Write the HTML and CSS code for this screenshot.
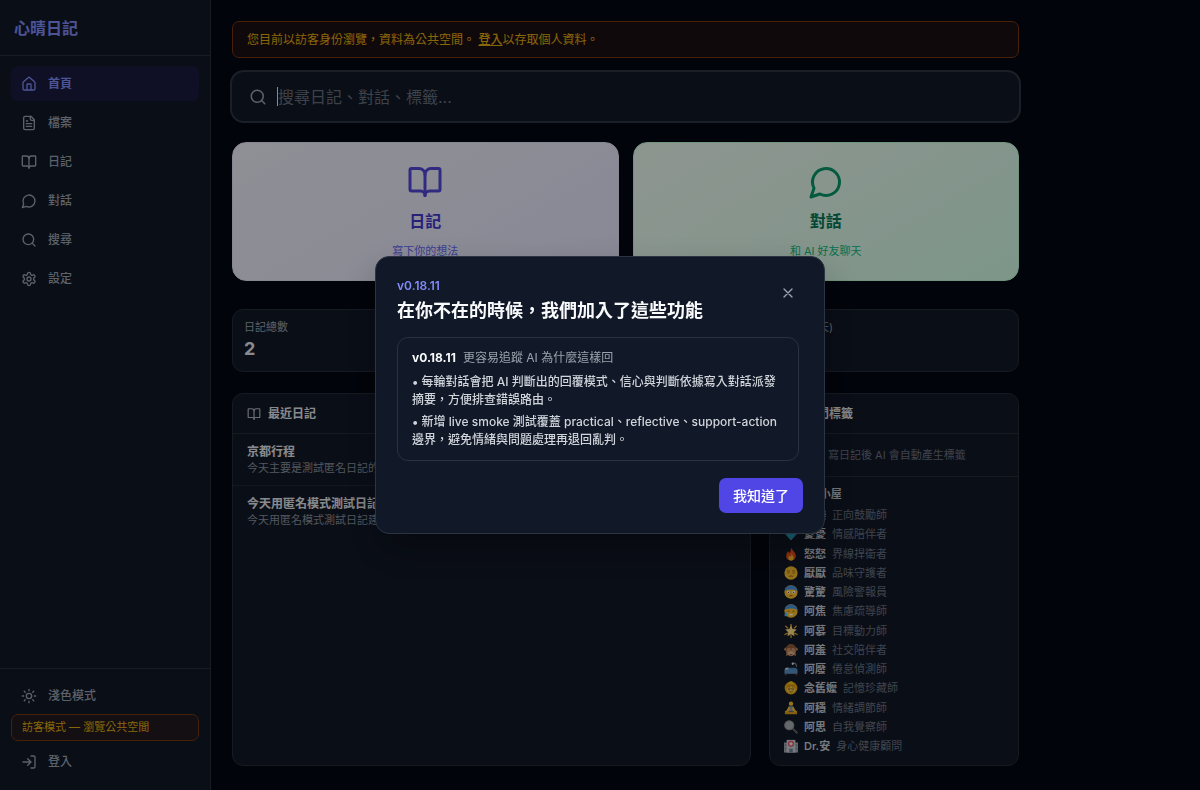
FILE: index.html
```html
<!DOCTYPE html>
<html lang="zh-Hant">
<head>
<meta charset="utf-8">
<meta name="viewport" content="width=device-width, initial-scale=1">
<title>心晴日記</title>
<link rel="stylesheet" href="styles.css">
</head>
<body>
<svg class="sprite" aria-hidden="true">
  <symbol id="i-home" viewBox="0 0 24 24"><path d="M15 21v-8a1 1 0 0 0-1-1h-4a1 1 0 0 0-1 1v8"/><path d="M3 10a2 2 0 0 1 .7-1.5l7-6a2 2 0 0 1 2.6 0l7 6A2 2 0 0 1 21 10v9a2 2 0 0 1-2 2H5a2 2 0 0 1-2-2z"/></symbol>
  <symbol id="i-file" viewBox="0 0 24 24"><path d="M15 2H6a2 2 0 0 0-2 2v16a2 2 0 0 0 2 2h12a2 2 0 0 0 2-2V7z"/><path d="M14 2v4a2 2 0 0 0 2 2h4M10 9H8M16 13H8M16 17H8"/></symbol>
  <symbol id="i-book" viewBox="0 0 24 24"><path d="M12 7v14"/><path d="M3 18a1 1 0 0 1-1-1V4a1 1 0 0 1 1-1h5a4 4 0 0 1 4 4 4 4 0 0 1 4-4h5a1 1 0 0 1 1 1v13a1 1 0 0 1-1 1h-6a3 3 0 0 0-3 3 3 3 0 0 0-3-3z"/></symbol>
  <symbol id="i-chat" viewBox="0 0 24 24"><path d="M7.9 20A9 9 0 1 0 4 16.1L2 22Z"/></symbol>
  <symbol id="i-search" viewBox="0 0 24 24"><circle cx="11" cy="11" r="8"/><path d="m21 21-4.3-4.3"/></symbol>
  <symbol id="i-gear" viewBox="0 0 24 24"><path d="M12.22 2h-.44a2 2 0 0 0-2 2v.18a2 2 0 0 1-1 1.73l-.43.25a2 2 0 0 1-2 0l-.15-.08a2 2 0 0 0-2.73.73l-.22.38a2 2 0 0 0 .73 2.73l.15.1a2 2 0 0 1 1 1.72v.51a2 2 0 0 1-1 1.74l-.15.09a2 2 0 0 0-.73 2.73l.22.38a2 2 0 0 0 2.73.73l.15-.08a2 2 0 0 1 2 0l.43.25a2 2 0 0 1 1 1.73V20a2 2 0 0 0 2 2h.44a2 2 0 0 0 2-2v-.18a2 2 0 0 1 1-1.73l.43-.25a2 2 0 0 1 2 0l.15.08a2 2 0 0 0 2.73-.73l.22-.39a2 2 0 0 0-.73-2.73l-.15-.08a2 2 0 0 1-1-1.74v-.5a2 2 0 0 1 1-1.74l.15-.09a2 2 0 0 0 .73-2.73l-.22-.38a2 2 0 0 0-2.73-.73l-.15.08a2 2 0 0 1-2 0l-.43-.25a2 2 0 0 1-1-1.73V4a2 2 0 0 0-2-2z"/><circle cx="12" cy="12" r="3"/></symbol>
  <symbol id="i-sun" viewBox="0 0 24 24"><circle cx="12" cy="12" r="4"/><path d="M12 2v2M12 20v2M4.93 4.93l1.41 1.41M17.66 17.66l1.41 1.41M2 12h2M20 12h2M6.34 17.66l-1.41 1.41M19.07 4.93l-1.41 1.41"/></symbol>
  <symbol id="i-login" viewBox="0 0 24 24"><path d="M15 3h4a2 2 0 0 1 2 2v14a2 2 0 0 1-2 2h-4M10 17l5-5-5-5M15 12H3"/></symbol>
  <symbol id="i-tag" viewBox="0 0 24 24"><path d="M4 9h16M4 15h16M10 3 8 21M16 3l-2 18"/></symbol>
  <symbol id="i-close" viewBox="0 0 24 24"><path d="M18 6 6 18M6 6l12 12"/></symbol>
</svg>

<div class="app">
  <aside class="sidebar">
    <div class="brand">心晴日記</div>
    <nav class="nav">
      <a class="nav-item active" href="#home"><svg class="icon"><use href="#i-home"/></svg>首頁</a>
      <a class="nav-item" href="#files"><svg class="icon"><use href="#i-file"/></svg>檔案</a>
      <a class="nav-item" href="#diary"><svg class="icon"><use href="#i-book"/></svg>日記</a>
      <a class="nav-item" href="#chat"><svg class="icon"><use href="#i-chat"/></svg>對話</a>
      <a class="nav-item" href="#search"><svg class="icon"><use href="#i-search"/></svg>搜尋</a>
      <a class="nav-item" href="#settings"><svg class="icon"><use href="#i-gear"/></svg>設定</a>
    </nav>
    <div class="side-foot">
      <button class="nav-item" type="button"><svg class="icon"><use href="#i-sun"/></svg>淺色模式</button>
      <div class="guest">訪客模式 — 瀏覽公共空間</div>
      <a class="nav-item" href="#login"><svg class="icon"><use href="#i-login"/></svg>登入</a>
    </div>
  </aside>

  <main class="main">
    <div class="content">
      <div class="banner">您目前以訪客身份瀏覽，資料為公共空間。 <a href="#login">登入</a>以存取個人資料。</div>

      <label class="search">
        <svg class="icon"><use href="#i-search"/></svg>
        <span class="caret"></span>
        <input type="text" placeholder="搜尋日記、對話、標籤..." aria-label="搜尋">
      </label>

      <div class="actions">
        <a class="action diary" href="#diary"><svg class="icon"><use href="#i-book"/></svg><strong>日記</strong><span>寫下你的想法</span></a>
        <a class="action chat" href="#chat"><svg class="icon"><use href="#i-chat"/></svg><strong>對話</strong><span>和 AI 好友聊天</span></a>
      </div>

      <div class="stats">
        <div class="stat"><span>日記總數</span><b>2</b></div>
        <div class="stat"></div>
        <div class="stat"><span>連續寫 (天)</span></div>
      </div>

      <div class="panels">
        <section class="panel">
          <h2 class="panel-head"><svg class="icon"><use href="#i-book"/></svg>最近日記</h2>
          <a class="entry" href="#d1"><b>京都行程</b><span>今天主要是測試匿名日記的</span></a>
          <a class="entry" href="#d2"><b>今天用匿名模式測試日記</b><span>今天用匿名模式測試日記建立</span></a>
        </section>

        <section class="panel">
          <h2 class="panel-head"><svg class="icon"><use href="#i-tag"/></svg>熱門標籤</h2>
          <p class="empty">無標籤，寫日記後 AI 會自動產生標籤</p>
          <div class="friends">
            <h3>AI 好友小屋</h3>
            <ul>
              <li><svg viewBox="0 0 16 16"><circle cx="8" cy="8" r="7" fill="#fbbf24"/></svg><b>樂樂</b><span>正向鼓勵師</span></li>
              <li><svg viewBox="0 0 16 16"><path d="M4 2h8l3 5-7 8-7-8z" fill="#3fc4dc"/><path d="M1 7h14l-7 8z" fill="#2aa5c4"/></svg><b>憂憂</b><span>情感陪伴者</span></li>
              <li><svg viewBox="0 0 16 16"><path d="M8 .5c1 3 5 5 5.500 9 .3 3.500-2 6-5.500 6s-6-2.500-5.500-6C2.800 7 4 6 4.500 4.500 5.500 5.500 5.800 6.500 6 7 7.500 5.500 8 3 8 .5z" fill="#f4511e"/><path d="M8.500 7c.5 2 2.500 3 2.500 5.200S9.500 15.500 8 15.500 4.800 14.300 5 12.300C5.200 11 6 10.500 6.300 9.800l1 1.200C8.200 10 8.700 8.500 8.500 7z" fill="#ffca28"/></svg><b>怒怒</b><span>界線捍衛者</span></li>
              <li><svg viewBox="0 0 16 16"><circle cx="8" cy="8" r="7.600" fill="#fcbf2d"/><path d="M3.500 6q1.500-1 3-.2M9.500 5.800q1.500-.8 3 .2M4 7.700q1 .6 2.200 0M9.800 7.700q1 .6 2.200 0M5.800 12q2.200-1.500 4.400 0" fill="none" stroke="#7a4f10" stroke-width=".9"/></svg><b>厭厭</b><span>品味守護者</span></li>
              <li><svg viewBox="0 0 16 16"><circle cx="8" cy="8" r="7.600" fill="#fcbf2d"/><path d="M.5 6.800a7.600 7.600 0 0 1 15 0Q8 3.500.5 6.800z" fill="#4a93e0"/><circle cx="5" cy="8.300" r="1.600" fill="#fff"/><circle cx="11" cy="8.300" r="1.600" fill="#fff"/><circle cx="5" cy="8.300" r=".7" fill="#442b10"/><circle cx="11" cy="8.300" r=".7" fill="#442b10"/><path d="M6 12.700q2-1.300 4 0" fill="none" stroke="#7a4f10" stroke-width=".9"/></svg><b>驚驚</b><span>風險警報員</span></li>
              <li><svg viewBox="0 0 16 16"><circle cx="8" cy="8" r="7.600" fill="#fcbf2d"/><path d="M.5 6.800a7.600 7.600 0 0 1 15 0Q8 3.500.5 6.800z" fill="#4a93e0"/><path d="M4 8.500q1.200-.8 2.400 0M9.600 8.500q1.200-.8 2.400 0" fill="none" stroke="#7a4f10" stroke-width=".9"/><path d="M6 11.500q2-1 4 0v1.300H6z" fill="#fff"/><path d="M2.200 8.500q2.300 3.500 1.200 5-1.500 1.300-2.600 0-.9-1.500 1.400-5z" fill="#5bbcf5"/></svg><b>阿焦</b><span>焦慮疏導師</span></li>
              <li><svg viewBox="0 0 16 16"><path d="M8 0v3M2 2.500l2.300 2M14 2.500l-2.300 2M1 12l3-1.500M15 12l-3-1.500M8 16v-3" stroke="#e8a52c" stroke-width="1.500" stroke-linecap="round"/><path d="M8 1.500l1.900 4.300 4.700.5-3.500 3.100 1 4.600L8 11.600 3.900 14l1-4.600-3.500-3.100 4.700-.5z" fill="#ffe08a"/></svg><b>阿慕</b><span>目標動力師</span></li>
              <li><svg viewBox="0 0 16 16"><circle cx="2.200" cy="7" r="1.900" fill="#c08a65"/><circle cx="13.800" cy="7" r="1.900" fill="#c08a65"/><path d="M8 1C3.800 1 2 4 2.200 8S5 15 8 15s5.600-3 5.800-7S12.200 1 8 1z" fill="#8d5a3b"/><ellipse cx="8" cy="11.500" rx="4" ry="3" fill="#e6b58a"/><path d="M2.500 14.500 3 7.500q2-3 4.500-1.500l-.5 4-2.500 1.500-.5 3zM13.500 14.500 13 7.500q-2-3-4.500-1.500l.5 4 2.500 1.500.5 3z" fill="#c98f68"/><path d="M6.500 13q1.500 1 3 0" fill="none" stroke="#5a3523"/></svg><b>阿羞</b><span>社交陪伴者</span></li>
              <li><svg viewBox="0 0 16 16"><path d="M10 1.500h3.200l1.300 4" fill="none" stroke="#aeb5bd"/><circle cx="10" cy="2" r="1.300" fill="#e8e8e8"/><path d="M2 6.500h11q2 0 2 2.500H1z" fill="#4a86bd"/><path d="M.5 8.500h15v5H.5z" fill="#5a8fc4"/><path d="M1 13.500h2V15H1zM13 13.500h2V15h-2z" fill="#6a4a35"/><path d="M1 8.500q0-2 2-2h2v2z" fill="#c8dced"/></svg><b>阿廢</b><span>倦怠偵測師</span></li>
              <li><svg viewBox="0 0 16 16"><circle cx="8" cy="8" r="7.300" fill="#e5a50a"/><circle cx="8" cy="2.500" r="2.300" fill="#f2bd2b"/><circle cx="8" cy="9" r="5" fill="#fbcd4a"/><path d="M3 8q1-4 5-4t5 4q-3-2-5-2T3 8z" fill="#c98a08"/><circle cx="6" cy="9" r="1.200" fill="none" stroke="#69480d" stroke-width=".7"/><circle cx="10" cy="9" r="1.200" fill="none" stroke="#69480d" stroke-width=".7"/><path d="M6 12q2 1.300 4 0" fill="none" stroke="#69480d" stroke-width=".8"/></svg><b>念舊嬤</b><span>記憶珍藏師</span></li>
              <li><svg viewBox="0 0 16 16"><circle cx="8" cy="3" r="2.500" fill="#f7c02e"/><path d="M5.500 6h5l.5 6H5z" fill="#8e9ab0"/><path d="M5.500 6 3 10.500 1 12v1.500h3L7 9zM10.500 6l2.500 4.500 2 1.500v1.500h-3L9 9z" fill="#f7c02e"/><path d="M1 13.500q3-2.500 7-1 4-1.500 7 1V15H1z" fill="#dc9b19"/></svg><b>阿穩</b><span>情緒調節師</span></li>
              <li><svg viewBox="0 0 16 16"><path d="m9.500 9.500 5.300 5" stroke="#666" stroke-width="2.200" stroke-linecap="round"/><circle cx="6" cy="6" r="5.200" fill="#a9b0b4" stroke="#919191" stroke-width="1.300"/></svg><b>阿思</b><span>自我覺察師</span></li>
              <li><svg viewBox="0 0 16 16"><path d="M0 4h16v11.500H0z" fill="#a4a9b0"/><path d="M3 1h10v14.500H3z" fill="#c8ccd2"/><circle cx="8" cy="5.500" r="3.500" fill="#e0566a"/><path d="M8 3.500v4M6 5.500h4" stroke="#fff" stroke-width="1.300"/><path d="M1 6h1.500v2H1zM13.500 6H15v2h-1.500zM1 10h1.500v2H1zM13.500 10H15v2h-1.500zM6 11h4v4.500H6z" fill="#68859a"/></svg><b>Dr.安</b><span>身心健康顧問</span></li>
            </ul>
          </div>
        </section>
      </div>
    </div>
  </main>
</div>

<div class="overlay">
  <div class="modal" role="dialog" aria-modal="true" aria-labelledby="modal-title">
    <header class="modal-head">
      <div>
        <p class="version">v0.18.11</p>
        <h1 id="modal-title">在你不在的時候，我們加入了這些功能</h1>
      </div>
      <button class="close" type="button" aria-label="關閉"><svg class="icon"><use href="#i-close"/></svg></button>
    </header>
    <article class="release">
      <p class="release-head"><b>v0.18.11</b><span>更容易追蹤 AI 為什麼這樣回</span></p>
      <p>• 每輪對話會把 AI 判斷出的回覆模式、信心與判斷依據寫入對話派發摘要，方便排查錯誤路由。</p>
      <p>• 新增 live smoke 測試覆蓋 practical、reflective、support-action 邊界，避免情緒與問題處理再退回亂判。</p>
    </article>
    <footer class="modal-foot"><button class="confirm" type="button">我知道了</button></footer>
  </div>
</div>
</body>
</html>
```
FILE: styles.css
```css
* { box-sizing: border-box; }
body {
  margin: 0;
  background: #030712;
  color: #e5e7eb;
  font: 12px/18px Inter, "Noto Sans CJK TC", sans-serif;
}
h1, h2, h3, p, ul { margin: 0; padding: 0; }
ul { list-style: none; }
a { color: inherit; text-decoration: none; }
button, input { font: inherit; color: inherit; }
.sprite { display: none; }
.icon {
  width: 16px;
  height: 16px;
  flex: none;
  fill: none;
  stroke: currentColor;
  stroke-width: 2;
  stroke-linecap: round;
  stroke-linejoin: round;
}

.app { display: flex; min-height: 100vh; }

/* Sidebar */
.sidebar {
  width: 211px;
  flex: none;
  display: flex;
  flex-direction: column;
  background: #111827;
  border-right: 1px solid #2a303c;
}
.brand {
  padding: 16px 14px 15px;
  border-bottom: 1px solid #2a303c;
  color: #818cf8;
  font-size: 16px;
  line-height: 24px;
  font-weight: 700;
}
.nav {
  flex: 1;
  display: flex;
  flex-direction: column;
  gap: 4px;
  padding: 10px 11px 0;
}
.nav-item {
  display: flex;
  align-items: center;
  gap: 11px;
  width: 100%;
  height: 35px;
  padding: 0 10px;
  border: 0;
  border-radius: 7px;
  background: none;
  color: #9ca3af;
  font-weight: 500;
  cursor: pointer;
}
.nav-item.active { background: #1a1b3e; color: #818cf8; font-weight: 600; }
.side-foot {
  padding: 9px 11px 11px;
  border-top: 1px solid #2a303c;
}
.guest {
  margin: 1px 0 3px;
  padding: 4px 10px;
  border: 1px solid #78350f;
  border-radius: 7px;
  background: #211a1e;
  color: #e3ac12;
  font-size: 11px;
  line-height: 17px;
}

/* Main column */
.main { flex: 1; display: flex; padding: 21px 21px 24px; }
.content {
  flex: 1;
  max-width: 787px;
  display: flex;
  flex-direction: column;
}
.banner {
  padding: 8px 14px;
  border: 1px solid #78350f;
  border-radius: 7px;
  background: #1b1013;
  color: #e3ac12;
  line-height: 19px;
}
.banner a { text-decoration: underline; font-weight: 500; }
.search {
  display: flex;
  align-items: center;
  margin: 12px -2px 19px;
  height: 53px;
  padding: 0 17px;
  border: 2px solid #2e3542;
  border-radius: 14px;
  background: #111827;
  color: #9ca3af;
}
.search .icon { width: 18px; height: 18px; }
.caret { width: 1px; height: 19px; margin-left: 10px; background: #e5e7eb; }
.search input {
  flex: 1;
  min-width: 0;
  padding: 0;
  border: 0;
  outline: 0;
  background: none;
  font-size: 16px;
}
.search input::placeholder { color: #676e7b; opacity: 1; }

.actions { display: grid; grid-template-columns: 1fr 1fr; gap: 14px; }
.action {
  display: flex;
  flex-direction: column;
  align-items: center;
  padding: 21px 20px 20px;
  border: 1px solid;
  border-radius: 14px;
}
.action .icon { width: 36px; height: 36px; }
.action strong { margin-top: 8px; font-size: 16px; line-height: 26px; font-weight: 600; }
.action span { margin-top: 8px; font-size: 11px; }
.diary { background: linear-gradient(150deg, #eeeff8, #e4e4fb); border-color: #e0e2f5; color: #4338ca; }
.diary .icon { color: #5346d8; }
.diary span { color: #6366f1; }
.chat { background: linear-gradient(150deg, #edf8f0, #d1fae5); border-color: #bbf7d0; color: #047857; }
.chat .icon { color: #059669; }
.chat span { color: #10b981; }

.stats { display: grid; grid-template-columns: repeat(3, 1fr); gap: 14px; margin: 28px 0 21px; }
.stat {
  min-height: 63px;
  padding: 8px 11px;
  border: 1px solid #252c38;
  border-radius: 11px;
  background: #111827;
}
.stat span { display: block; color: #9ca3af; font-size: 11px; }
.stat b { display: block; font-size: 18px; line-height: 25px; }

.panels { flex: 1; display: grid; grid-template-columns: 1fr 250px; gap: 18px; }
.panel {
  display: flex;
  flex-direction: column;
  min-width: 0;
  border: 1px solid #252c38;
  border-radius: 11px;
  background: #111827;
}
.panel-head {
  display: flex;
  align-items: center;
  gap: 7px;
  padding: 10px 14px;
  border-bottom: 1px solid #252c38;
  font-size: 12px;
  line-height: 19px;
  font-weight: 600;
}
.panel-head .icon { width: 14px; height: 14px; color: #b3b8c1; }
.entry { padding: 9px 14px 8px; line-height: 17px; }
.entry + .entry { border-top: 1px solid #1f2937; }
.entry b, .entry span { display: block; overflow: hidden; white-space: nowrap; text-overflow: clip; }
.entry b { font-weight: 600; }
.entry span { color: #8a919e; font-size: 11px; }
.empty { padding: 12px 14px; color: #6b7280; font-size: 11px; border-bottom: 1px solid #252c38; }
.friends { flex: 1; display: flex; flex-direction: column; padding: 8px 14px 10px; font-size: 11px; }
.friends h3 { margin-bottom: 3px; font-size: 11px; font-weight: 600; color: #c4c8cf; }
.friends ul { flex: 1; display: flex; flex-direction: column; justify-content: space-between; }
.friends li { display: flex; align-items: center; gap: 6px; }
.friends li svg { width: 14px; height: 14px; }
.friends b { font-weight: 600; color: #c4c8cf; }
.friends span { color: #6b7280; }

/* Release notes dialog */
.overlay {
  position: fixed;
  inset: 0;
  display: flex;
  align-items: center;
  justify-content: center;
  background: rgba(0, 0, 0, .4);
}
.modal {
  width: 450px;
  max-width: 94vw;
  padding: 21px 21px 20px;
  border: 1px solid #2b3442;
  border-radius: 14px;
  background: #111827;
  box-shadow: 0 20px 40px rgba(0, 0, 0, .3);
}
.modal-head { display: flex; justify-content: space-between; align-items: flex-start; }
.version { color: #818cf8; font-weight: 600; line-height: 16px; }
.modal h1 { margin-top: 3px; color: #f9fafb; font-size: 18px; line-height: 28px; font-weight: 600; }
.close {
  display: flex;
  padding: 7px;
  border: 0;
  background: none;
  color: #9ca3af;
  cursor: pointer;
}
.release {
  margin: 12px 4px 17px 0;
  padding: 11px 14px;
  border: 1px solid #293241;
  border-radius: 11px;
  color: #d1d5db;
  font-weight: 500;
}
.release p + p { margin-top: 4px; }
.release .release-head { margin-bottom: 6px; color: #9ca3af; font-weight: 400; }
.release .release-head + p { margin-top: 0; }
.release-head b { margin-right: 7px; color: #f9fafb; font-weight: 700; }
.modal-foot { display: flex; justify-content: flex-end; }
.confirm {
  height: 35px;
  padding: 0 14px;
  border: 0;
  border-radius: 7px;
  background: #4f46e5;
  color: #fff;
  font-size: 14px;
  font-weight: 500;
  cursor: pointer;
}
```
